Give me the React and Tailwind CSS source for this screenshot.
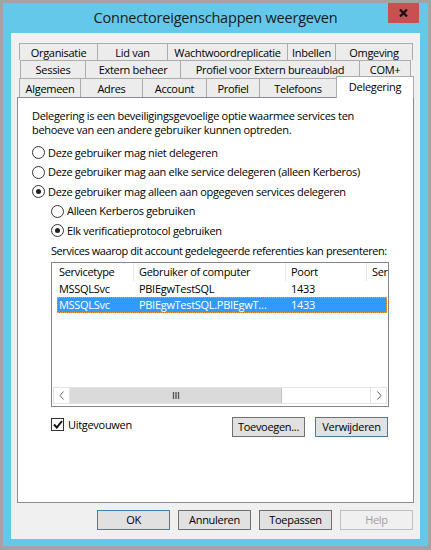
import React from 'react';

const tabRows = [
  {
    cls: 'ml-[2px] h-[17px]',
    tabs: [
      ['Organisatie', 'w-[78px]'],
      ['Lid van', 'w-[70px]'],
      ['Wachtwoordreplicatie', 'w-[120px]'],
      ['Inbellen', 'w-[48px]'],
      ['Omgeving', 'w-[78px] border-r'],
    ],
  },
  {
    cls: 'ml-[3px] h-[18px]',
    tabs: [
      ['Sessies', 'w-[65px]'],
      ['Extern beheer', 'w-[95px]'],
      ['Profiel voor Extern bureaublad', 'w-[179px]'],
      ['COM+', 'w-[52px] border-r'],
    ],
  },
];

const row3 = [
  ['Algemeen', 'w-[61px]'],
  ['Adres', 'w-[62px]'],
  ['Account', 'w-[64px]'],
  ['Profiel', 'w-[53px]'],
  ['Telefoons', 'w-[77px]'],
];

const Tab = ({ label, cls }) => (
  <div className={`${cls} h-full shrink-0 border-t border-l border-[#acacac] bg-[#ececec] flex items-center justify-center pt-px whitespace-nowrap`}>
    {label}
  </div>
);

const Radio = ({ checked, label }) => (
  <div className="flex items-center h-[19.5px]">
    <span className="w-[13px] h-[13px] rounded-full border border-[#333] bg-white flex items-center justify-center shrink-0">
      {checked && <span className="w-[5px] h-[5px] rounded-full bg-[#222]" />}
    </span>
    <span className="ml-[3px]">{label}</span>
  </div>
);

const Button = ({ children, cls }) => (
  <div className={`h-[20px] flex items-center justify-center border ${cls}`}>{children}</div>
);

const Chevron = ({ dir }) => (
  <svg width="6" height="9" viewBox="0 0 6 9">
    <polyline
      points={dir === 'left' ? '4.5,0.5 1,4.5 4.5,8.5' : '1.5,0.5 5,4.5 1.5,8.5'}
      fill="none"
      stroke="#606060"
      strokeWidth="1"
    />
  </svg>
);

export default function App() {
  return (
    <div className="w-[431px] h-[550px] bg-[#a3a3a3] pt-[3px] px-[3px] pb-[4px] font-['Open_Sans',sans-serif] text-[11px] tracking-[-0.3px] text-black leading-[14px]">
      <div className="h-full bg-[#64c8ea] px-[8px] pb-[7px] flex flex-col">
        {/* Titelbalk */}
        <div className="h-[30px] relative flex items-center justify-center shrink-0">
          <span className="text-[14.5px] tracking-[-0.2px] text-[#1a1a1a]">Connectoreigenschappen weergeven</span>
          <div className="absolute right-[1px] top-0 w-[31px] h-[20px] bg-[#c75050] flex items-center justify-center">
            <svg width="9" height="8" viewBox="0 0 9 8">
              <path d="M1 0.5 L8 7.5 M8 0.5 L1 7.5" stroke="#111" strokeWidth="2.2" />
            </svg>
          </div>
        </div>

        {/* Venster */}
        <div className="flex-1 bg-[#f0f0f0] px-[6px] pt-[10px] flex flex-col">
          {tabRows.map((row, i) => (
            <div key={i} className={`flex ${row.cls}`}>
              {row.tabs.map(([label, cls]) => (
                <Tab key={label} label={label} cls={cls} />
              ))}
            </div>
          ))}
          <div className="flex items-end ml-[2px] h-[19px] relative z-10">
            {row3.map(([label, cls]) => (
              <Tab key={label} label={label} cls={cls} />
            ))}
            <div className="w-[78px] h-[22px] -mb-px shrink-0 border-t border-l border-r border-[#acacac] bg-white flex items-center justify-center pb-[2px]">
              Delegering
            </div>
          </div>

          {/* Tabblad inhoud */}
          <div className="h-[406px] bg-white border border-[#898c95] pl-[14px] pt-[11px] flex flex-col">
            <p>
              Delegering is een beveiligingsgevoelige optie waarmee services ten
              <br />
              behoeve van een andere gebruiker kunnen optreden.
            </p>
            <div className="mt-[6px]">
              <Radio label="Deze gebruiker mag niet delegeren" />
              <Radio label="Deze gebruiker mag aan elke service delegeren (alleen Kerberos)" />
              <Radio checked label="Deze gebruiker mag alleen aan opgegeven services delegeren" />
            </div>
            <div className="pl-[19px]">
              <Radio label="Alleen Kerberos gebruiken" />
              <Radio checked label="Elk verificatieprotocol gebruiken" />
              <p className="mt-[3px] whitespace-nowrap tracking-[-0.42px]">Services waarop dit account gedelegeerde referenties kan presenteren:</p>

              {/* Lijst */}
              <div className="mt-[4px] w-[338px] h-[145px] border border-[#828790] flex flex-col">
                <div className="flex h-[18px] items-center shrink-0">
                  <div className="w-[82px] h-full pl-[7px] flex items-center border-r border-[#e5e5e5]">Servicetype</div>
                  <div className="w-[152px] h-full pl-[5px] flex items-center border-r border-[#e5e5e5]">Gebruiker of computer</div>
                  <div className="w-[81px] h-full pl-[5px] flex items-center border-r border-[#e5e5e5]">Poort</div>
                  <div className="flex-1 h-full pl-[5px] flex items-center overflow-hidden whitespace-nowrap">Ser</div>
                </div>
                <div className="flex h-[16px] items-center ml-[5px] mr-px">
                  <div className="w-[77px] pl-[2px]">MSSQLSvc</div>
                  <div className="w-[152px] pl-[5px]">PBIEgwTestSQL</div>
                  <div className="pl-[5px]">1433</div>
                </div>
                <div className="flex h-[16px] items-center ml-[5px] mr-px bg-[#3399ff] text-white border border-dotted border-[#ff9933]">
                  <div className="w-[76px] pl-px">MSSQLSvc</div>
                  <div className="w-[152px] pl-[5px] pr-[14px] truncate">PBIEgwTestSQL.PBIEgwTestSQL</div>
                  <div className="pl-[5px]">1433</div>
                </div>
                <div className="flex-1" />
                {/* Horizontale schuifbalk */}
                <div className="h-[17px] mx-px mb-[2px] flex border border-[#e3e3e3] bg-white">
                  <div className="w-[16px] flex items-center justify-center border-r border-[#e3e3e3]">
                    <Chevron dir="left" />
                  </div>
                  <div className="w-[212px] bg-[#dadada] border-r border-[#c2c2c2] flex items-center justify-center">
                    <svg width="8" height="7" viewBox="0 0 8 7">
                      <path d="M1.5 0 V7 M4 0 V7 M6.5 0 V7" stroke="#555" strokeWidth="1.3" />
                    </svg>
                  </div>
                  <div className="flex-1" />
                  <div className="w-[16px] flex items-center justify-center border-l border-[#e3e3e3]">
                    <Chevron dir="right" />
                  </div>
                </div>
              </div>

              <div className="w-[338px] mt-[10px] flex items-start">
                <div className="flex items-center h-[14px] mt-[1px]">
                  <span className="w-[13px] h-[13px] border border-[#333] bg-white flex items-center justify-center">
                    <svg width="10" height="9" viewBox="0 0 10 9">
                      <path d="M1 4.5 L3.8 7.5 L9 1" fill="none" stroke="#111" strokeWidth="2" />
                    </svg>
                  </span>
                  <span className="ml-[4px]">Uitgevouwen</span>
                </div>
                <div className="flex-1" />
                <Button cls="w-[73px] bg-[#e1e1e1] border-[#707070]">Toevoegen...</Button>
                <Button cls="w-[73px] ml-[10px] mr-px bg-[#e1e1e1] border-[#3c7fb1]">Verwijderen</Button>
              </div>
            </div>
          </div>

          {/* Knoppen onderaan */}
          <div className="mt-[7px] flex justify-end gap-[8px] mr-px">
            <Button cls="w-[73px] bg-[#e1e1e1] border-[#3c7fb1]">OK</Button>
            <Button cls="w-[73px] bg-[#e1e1e1] border-[#707070]">Annuleren</Button>
            <Button cls="w-[73px] bg-[#e1e1e1] border-[#707070]">Toepassen</Button>
            <Button cls="w-[73px] bg-[#f0f0f0] border-[#bfbfbf] text-[#a0a0a0]">Help</Button>
          </div>
        </div>
      </div>
    </div>
  );
}
